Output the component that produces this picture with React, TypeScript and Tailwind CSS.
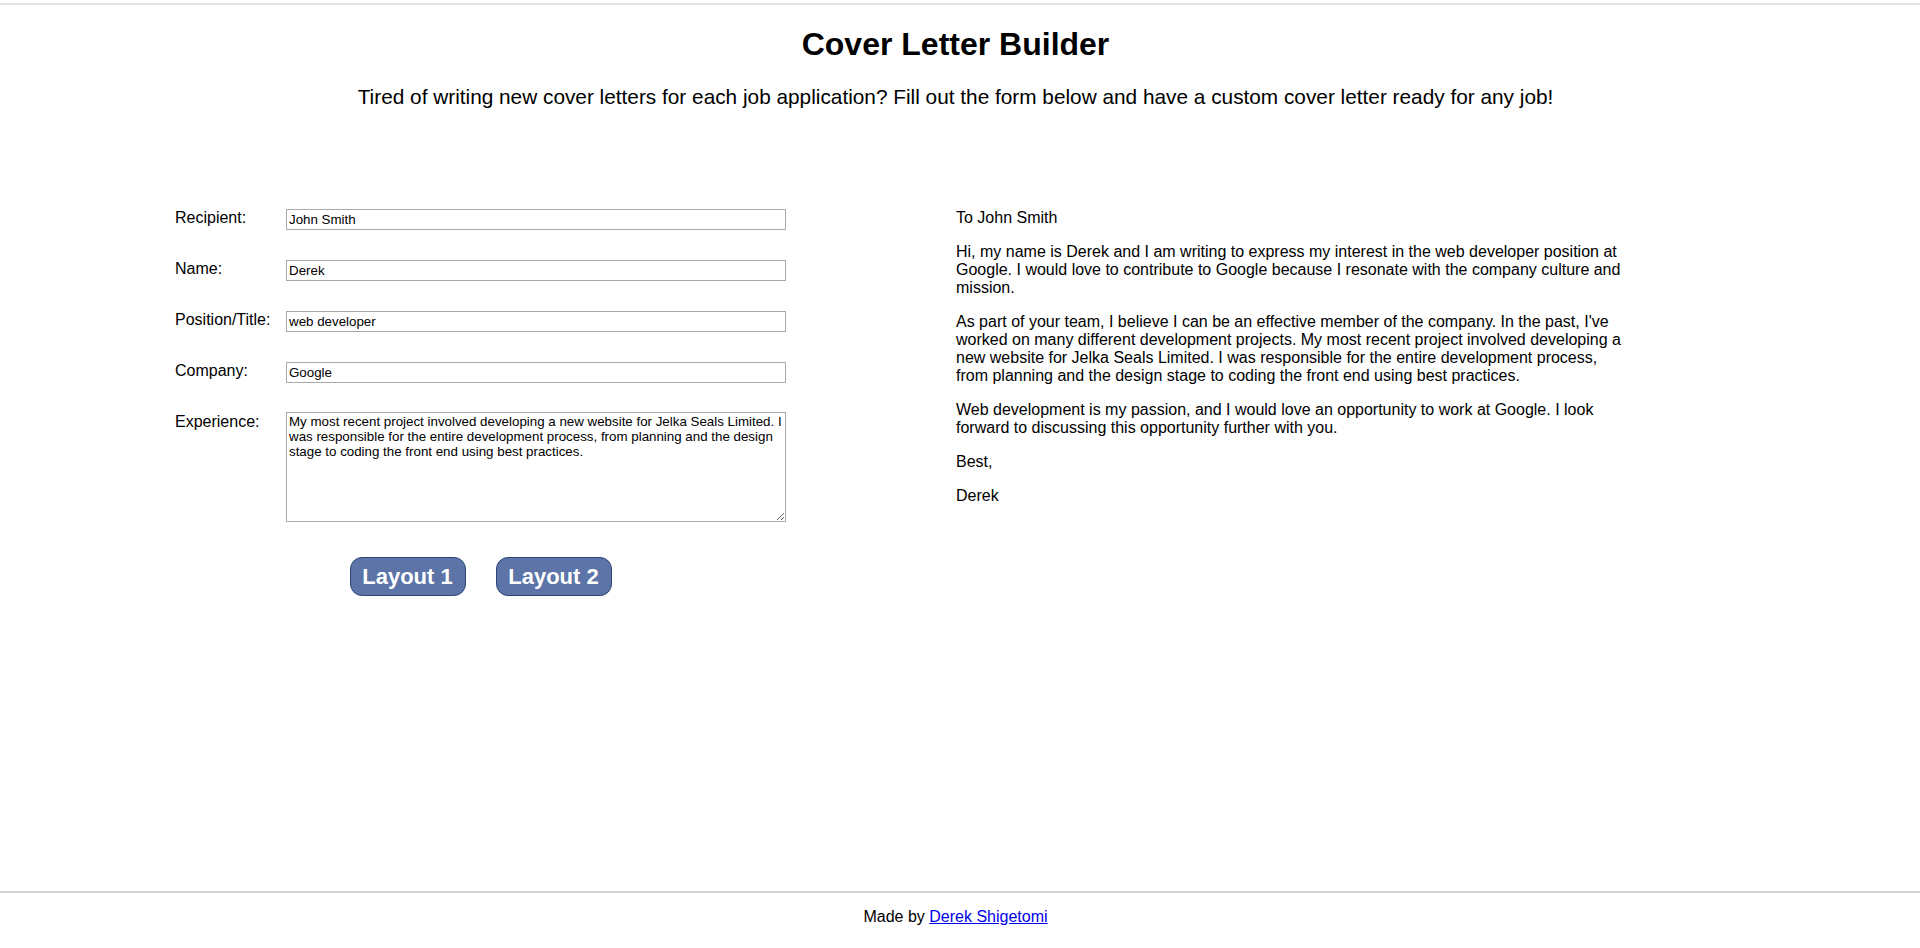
import { useState } from 'react';

export default function App() {
  const [recipient, setRecipient] = useState('John Smith');
  const [name, setName] = useState('Derek');
  const [position, setPosition] = useState('web developer');
  const [company, setCompany] = useState('Google');
  const [experience, setExperience] = useState(
    'My most recent project involved developing a new website for Jelka Seals Limited. I was responsible for the entire development process, from planning and the design stage to coding the front end using best practices.'
  );

  const fields = [
    { label: 'Recipient:', value: recipient, onChange: setRecipient },
    { label: 'Name:', value: name, onChange: setName },
    { label: 'Position/Title:', value: position, onChange: setPosition },
    { label: 'Company:', value: company, onChange: setCompany },
  ];

  return (
    <div className="min-h-screen flex flex-col bg-white text-black font-['Liberation_Sans',Arial,sans-serif]">
      {/* Header */}
      <header className="mt-[3px] border-t-2 border-[#e3e3e3] text-center pr-[9px]">
        <h1 className="pt-[21px] text-[32px] font-bold leading-[37px]">Cover Letter Builder</h1>
        <p className="mt-[22px] text-[20.8px] leading-[24px]">
          Tired of writing new cover letters for each job application? Fill out the form below and have a custom cover letter ready for any job!
        </p>
      </header>

      {/* Form + preview */}
      <main className="flex-1 flex items-start pl-[175px] pt-[100px]">
        <div className="w-[611px] flex flex-col">
          {fields.map((field) => (
            <div key={field.label} className="flex items-start mb-[30px]">
              <label className="w-[111px] text-[16px] leading-[18px]">{field.label}</label>
              <input
                type="text"
                value={field.value}
                onChange={(e) => field.onChange(e.target.value)}
                className="w-[500px] h-[21px] border border-[#a9a9a9] px-[2px] text-[13.33px] leading-[15px] outline-none"
              />
            </div>
          ))}
          <div className="flex items-start -mt-px">
            <label className="w-[111px] text-[16px] leading-[18px] pt-[1px]">Experience:</label>
            <textarea
              value={experience}
              onChange={(e) => setExperience(e.target.value)}
              className="w-[500px] h-[110px] border border-[#a9a9a9] px-[2px] py-px text-[13.33px] leading-[15px] outline-none"
            />
          </div>
          <div className="flex justify-center gap-[30px] mt-[35px]">
            <button className="w-[116px] h-[39px] rounded-[12px] bg-[#5c74a8] border border-[#2e4577] text-white font-bold text-[22px] leading-[25px]">
              Layout 1
            </button>
            <button className="w-[116px] h-[39px] rounded-[12px] bg-[#5c74a8] border border-[#2e4577] text-white font-bold text-[22px] leading-[25px]">
              Layout 2
            </button>
          </div>
        </div>

        <div className="ml-[170px] w-[670px] text-[16px] leading-[18px]">
          <p className="mb-[16px]">To {recipient}</p>
          <p className="mb-[16px]">
            Hi, my name is {name} and I am writing to express my interest in the {position} position at {company}. I would love to contribute to {company} because I resonate with the company culture and mission.
          </p>
          <p className="mb-[16px]">
            As part of your team, I believe I can be an effective member of the company. In the past, I've worked on many different development projects. {experience}
          </p>
          <p className="mb-[16px]">
            Web development is my passion, and I would love an opportunity to work at {company}. I look forward to discussing this opportunity further with you.
          </p>
          <p className="mb-[16px]">Best,</p>
          <p>{name}</p>
        </div>
      </main>

      {/* Footer */}
      <footer className="h-[57px] border-t-2 border-[#d4d4d4] text-center pt-[15px] pr-[9px] text-[16px] leading-[18px]">
        Made by{' '}
        <a href="#" className="text-[#0000ee] underline">
          Derek Shigetomi
        </a>
      </footer>
    </div>
  );
}
